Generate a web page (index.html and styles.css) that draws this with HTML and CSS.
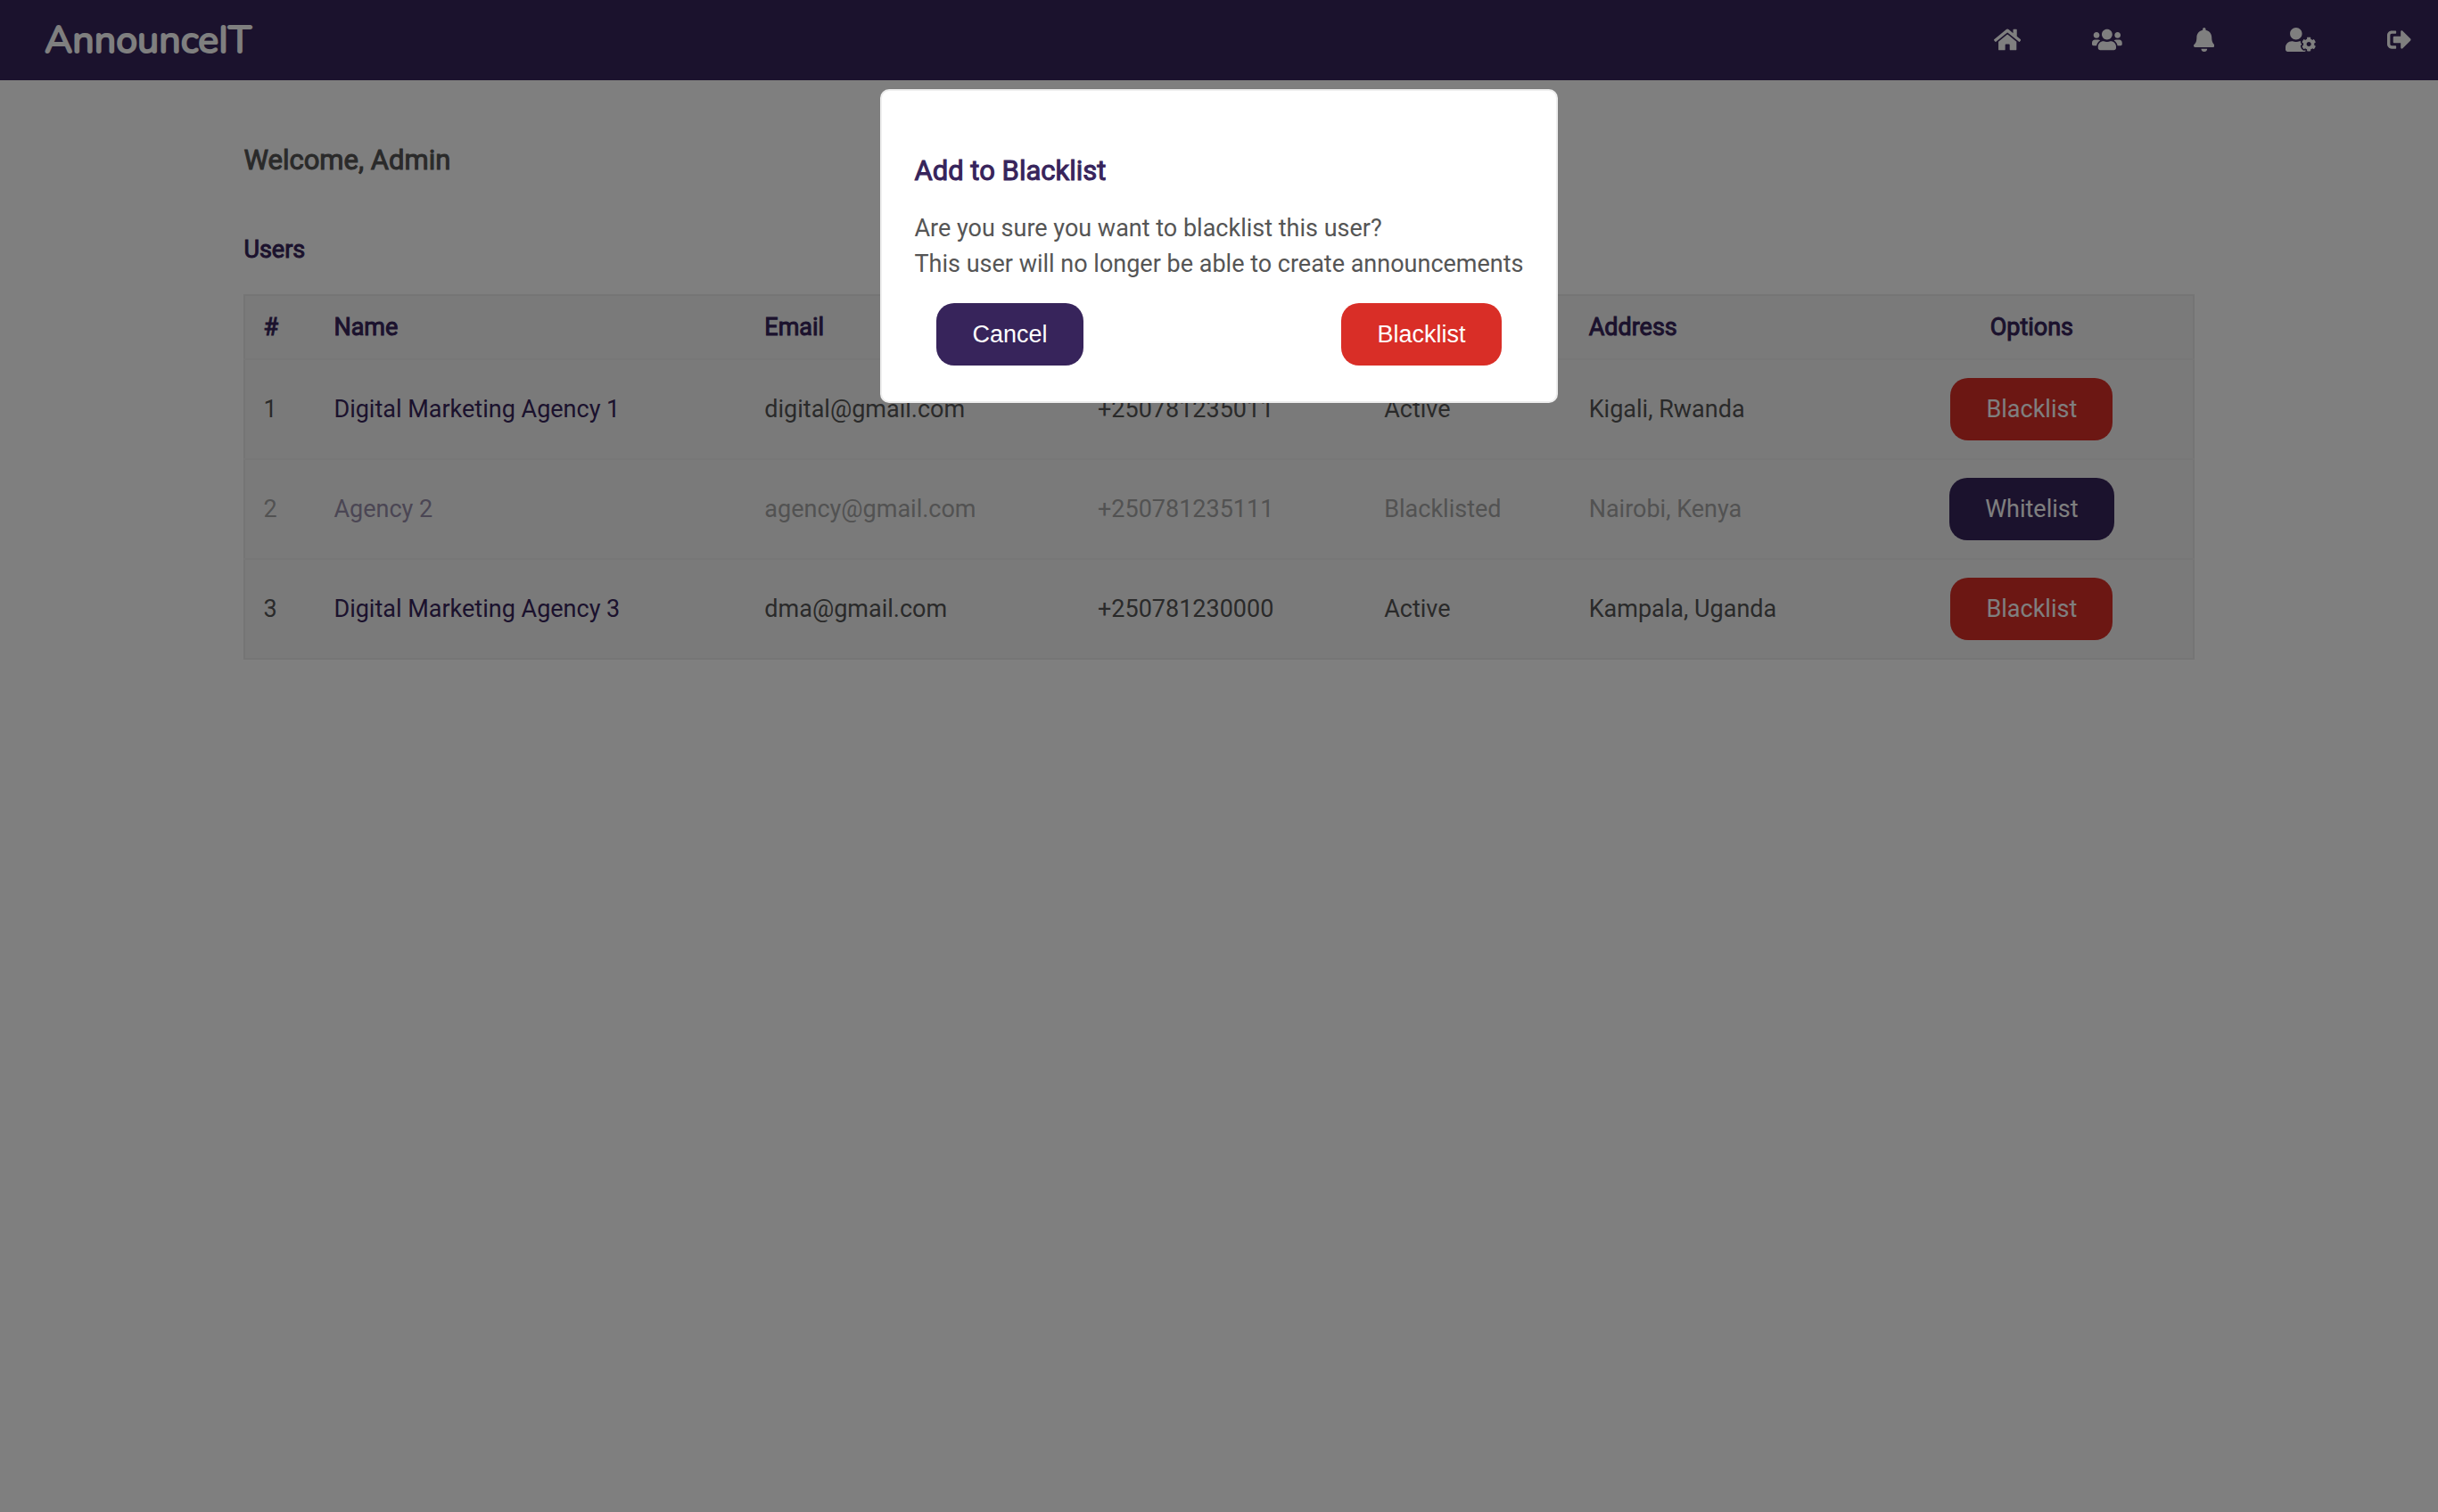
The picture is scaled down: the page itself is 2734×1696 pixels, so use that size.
FILE: index.html
```html
<!DOCTYPE html>
<html lang="en">
<head>
  <meta charset="utf-8">
  <meta name="viewport" content="width=device-width, initial-scale=1">
  <title>AnnounceIT</title>
  <link rel="stylesheet" href="styles.css">
</head>
<body>
  <header class="navbar">
    <a class="logo" href="#">AnnounceIT</a>
    <nav class="menu">
      <a class="menu-link" href="#" aria-label="Home"><svg class="icon" viewBox="0 0 576 512"><path d="M280.37 148.26L96 300.11V464a16 16 0 0 0 16 16l112.06-.29a16 16 0 0 0 15.92-16V368a16 16 0 0 1 16-16h64a16 16 0 0 1 16 16v95.64a16 16 0 0 0 16 16.05L464 480a16 16 0 0 0 16-16V300L295.67 148.26a12.19 12.19 0 0 0-15.3 0zM571.6 251.47L488 182.56V44.05a12 12 0 0 0-12-12h-56a12 12 0 0 0-12 12v72.61L318.47 43a48 48 0 0 0-61 0L4.34 251.47a12 12 0 0 0-1.6 16.9l25.5 31A12 12 0 0 0 45.15 301l235.22-193.74a12.19 12.19 0 0 1 15.3 0L530.9 301a12 12 0 0 0 16.9-1.6l25.5-31a12 12 0 0 0-1.7-16.93z"/></svg></a>
      <a class="menu-link" href="#" aria-label="Users"><svg class="icon" viewBox="0 0 640 512"><path d="M96 224c35.3 0 64-28.7 64-64s-28.7-64-64-64-64 28.7-64 64 28.7 64 64 64zm448 0c35.3 0 64-28.7 64-64s-28.7-64-64-64-64 28.7-64 64 28.7 64 64 64zm32 32h-64c-17.6 0-33.5 7.1-45.1 18.6 40.3 22.1 68.9 62 75.1 109.4h66c17.7 0 32-14.3 32-32v-32c0-35.3-28.7-64-64-64zm-256 0c61.9 0 112-50.1 112-112S381.9 32 320 32 208 82.1 208 144s50.1 112 112 112zm76.8 32h-8.3c-20.8 10-43.9 16-68.5 16s-47.6-6-68.5-16h-8.3C179.6 288 128 339.6 128 403.2V432c0 26.5 21.5 48 48 48h288c26.5 0 48-21.5 48-48v-28.8c0-63.6-51.6-115.2-115.2-115.2zm-223.7-13.4C161.5 263.1 145.6 256 128 256H64c-35.3 0-64 28.7-64 64v32c0 17.7 14.3 32 32 32h65.9c6.3-47.4 34.9-87.3 75.2-109.4z"/></svg></a>
      <a class="menu-link" href="#" aria-label="Notifications"><svg class="icon" viewBox="0 0 448 512"><path d="M224 512c35.32 0 63.97-28.65 63.97-64H160.03c0 35.35 28.65 64 63.97 64zm215.39-149.71c-19.32-20.76-55.47-51.99-55.47-154.29 0-77.7-54.48-139.9-127.94-155.16V32c0-17.67-14.32-32-31.98-32s-31.98 14.33-31.98 32v20.84C118.56 68.1 64.08 130.3 64.08 208c0 102.3-36.15 133.53-55.47 154.29-6 6.45-8.66 14.16-8.61 21.71.11 16.4 12.98 32 32.1 32h383.8c19.12 0 32-15.6 32.1-32 .05-7.55-2.61-15.27-8.61-21.71z"/></svg></a>
      <a class="menu-link" href="#" aria-label="Account settings"><svg class="icon" viewBox="0 0 640 512"><path d="M610.5 373.3c2.6-14.1 2.6-28.5 0-42.6l25.8-14.9c3-1.7 4.3-5.2 3.3-8.5-6.7-21.6-18.2-41.2-33.2-57.4-2.3-2.5-6-3.1-9-1.4l-25.8 14.9c-10.9-9.3-23.4-16.5-36.9-21.3v-29.8c0-3.4-2.4-6.4-5.7-7.1-22.3-5-45-4.8-66.2 0-3.3.7-5.7 3.7-5.7 7.1v29.8c-13.5 4.8-26 12-36.9 21.3l-25.8-14.9c-2.9-1.7-6.7-1.1-9 1.4-15 16.2-26.5 35.8-33.2 57.4-1 3.3.4 6.8 3.3 8.5l25.8 14.9c-2.6 14.1-2.6 28.5 0 42.6l-25.8 14.9c-3 1.7-4.3 5.2-3.3 8.5 6.7 21.6 18.2 41.1 33.2 57.4 2.3 2.5 6 3.1 9 1.4l25.8-14.9c10.9 9.3 23.4 16.5 36.9 21.3v29.8c0 3.4 2.4 6.4 5.7 7.1 22.3 5 45 4.8 66.2 0 3.3-.7 5.7-3.7 5.7-7.1v-29.8c13.5-4.8 26-12 36.9-21.3l25.8 14.9c2.9 1.7 6.7 1.1 9-1.4 15-16.2 26.5-35.8 33.2-57.4 1-3.3-.4-6.8-3.3-8.5l-25.8-14.9zM496 400.5c-26.8 0-48.5-21.8-48.5-48.5s21.8-48.5 48.5-48.5 48.5 21.8 48.5 48.5-21.7 48.5-48.5 48.5zM224 256c70.7 0 128-57.3 128-128S294.7 0 224 0 96 57.3 96 128s57.3 128 128 128zm201.2 226.5c-2.3-1.2-4.6-2.6-6.8-3.9l-7.9 4.6c-6 3.4-12.8 5.3-19.6 5.3-10.9 0-21.4-4.6-28.9-12.6-18.3-19.8-32.3-43.9-40.2-69.6-5.5-17.7 1.9-36.4 17.9-45.7l7.9-4.6c-.1-2.6-.1-5.2 0-7.8l-7.9-4.6c-16-9.2-23.4-28-17.9-45.7.9-2.9 2.2-5.8 3.2-8.7-3.8-.3-7.5-1.2-11.4-1.2h-16.7c-22.2 10.2-46.9 16-72.9 16s-50.6-5.8-72.9-16h-16.7C60.2 288 0 348.2 0 422.4V464c0 26.5 21.5 48 48 48h352c10.1 0 19.5-3.2 27.2-8.5-1.2-3.8-2-7.7-2-11.8v-9.2z"/></svg></a>
      <a class="menu-link" href="#" aria-label="Sign out"><svg class="icon" viewBox="0 0 512 512"><path d="M497 273L329 441c-15 15-41 4.5-41-17v-96H152c-13.3 0-24-10.7-24-24v-96c0-13.3 10.7-24 24-24h136V88c0-21.4 25.9-32 41-17l168 168c9.3 9.4 9.3 24.6 0 34zM192 436v-40c0-6.6-5.4-12-12-12H96c-17.7 0-32-14.3-32-32V160c0-17.7 14.3-32 32-32h84c6.6 0 12-5.4 12-12V76c0-6.6-5.4-12-12-12H96c-53 0-96 43-96 96v192c0 53 43 96 96 96h84c6.6 0 12-5.4 12-12z"/></svg></a>
    </nav>
  </header>

  <main class="content">
    <h1 class="welcome">Welcome, Admin</h1>
    <h2 class="section-title">Users</h2>
    <table class="users">
      <colgroup>
        <col class="col-id"><col class="col-name"><col class="col-email"><col class="col-phone">
        <col class="col-status"><col class="col-address"><col class="col-options">
      </colgroup>
      <thead>
        <tr><th>#</th><th>Name</th><th>Email</th><th>Phone</th><th>Status</th><th>Address</th><th class="options">Options</th></tr>
      </thead>
      <tbody>
        <tr>
          <td>1</td><td><a class="user-link" href="#">Digital Marketing Agency 1</a></td><td>digital@gmail.com</td><td>+250781235011</td><td>Active</td><td>Kigali, Rwanda</td>
          <td class="options"><button class="btn btn-danger" type="button">Blacklist</button></td>
        </tr>
        <tr class="blacklisted">
          <td>2</td><td><a class="user-link" href="#">Agency 2</a></td><td>agency@gmail.com</td><td>+250781235111</td><td>Blacklisted</td><td>Nairobi, Kenya</td>
          <td class="options"><button class="btn btn-primary" type="button">Whitelist</button></td>
        </tr>
        <tr>
          <td>3</td><td><a class="user-link" href="#">Digital Marketing Agency 3</a></td><td>dma@gmail.com</td><td>+250781230000</td><td>Active</td><td>Kampala, Uganda</td>
          <td class="options"><button class="btn btn-danger" type="button">Blacklist</button></td>
        </tr>
      </tbody>
    </table>
  </main>

  <div class="overlay">
    <section class="modal" role="dialog" aria-modal="true" aria-labelledby="modal-title">
      <h2 class="modal-title" id="modal-title">Add to Blacklist</h2>
      <p class="modal-text">Are you sure you want to blacklist this user?<br>This user will no longer be able to create announcements</p>
      <div class="modal-actions">
        <button class="btn btn-primary" type="button">Cancel</button>
        <button class="btn btn-danger" type="button">Blacklist</button>
      </div>
    </section>
  </div>
</body>
</html>
```
FILE: styles.css
```css
* {
  box-sizing: border-box;
}

body {
  margin: 0;
  background: #fff;
  color: #555;
  font-family: Roboto, "Liberation Sans", sans-serif;
  font-size: 27px;
  line-height: 40px;
}

h1,
h2,
p {
  margin: 0;
}

a {
  text-decoration: none;
}

/* Headings: regular weight, thickened by an outline */
.welcome,
.section-title,
.modal-title,
.users th {
  font-weight: 400;
  -webkit-text-stroke: 1px currentColor;
}

.navbar {
  display: flex;
  align-items: center;
  justify-content: space-between;
  height: 90px;
  padding: 0 30px 0 50px;
  background: #37245b;
}

.logo {
  color: #fff;
  font-family: Nunito, Lato, sans-serif;
  font-size: 43px;
  line-height: 60px;
  -webkit-text-stroke: 2px currentColor;
  stroke-linejoin: round;
}

.menu {
  display: flex;
  align-items: center;
  gap: 80px;
  padding-bottom: 2px;
}

.menu-link {
  display: flex;
  color: #fff;
}

.icon {
  height: 27px;
  fill: currentColor;
}

.content {
  width: 80%;
  margin: 0 auto;
  padding-top: 70px;
}

.welcome {
  font-size: 31px;
  margin-bottom: 60px;
}

.section-title {
  color: #37245b;
  font-size: 27px;
  margin-bottom: 30px;
}

.users {
  width: 100%;
  table-layout: fixed;
  border: 2px solid #ebebeb;
  border-collapse: collapse;
  background: #f5f5f5;
}

.col-id { width: 80px; }
.col-name { width: 22.1%; }
.col-email { width: 17.1%; }
.col-phone { width: 14.7%; }
.col-status { width: 10.5%; }
.col-address { width: 15.4%; }

.users th,
.users td {
  padding: 20px;
  border-bottom: 2px solid #eee;
  text-align: left;
  line-height: 30px;
}

.users tr:last-child td {
  border-bottom-color: #ebebeb;
}

.users th {
  color: #37245b;
}

.users .options {
  text-align: center;
}

.user-link {
  color: #37245b;
}

.blacklisted {
  color: #a5a5a5;
}

.blacklisted .user-link {
  color: #968da8;
}

.btn {
  height: 70px;
  padding: 0 40px;
  border: 0;
  border-radius: 20px;
  color: #fff;
  font-family: "Liberation Sans", Arial, sans-serif;
  font-size: 27px;
  cursor: pointer;
}

.users .btn {
  display: inline-block;
  vertical-align: middle;
  font-family: inherit;
}

.btn-primary {
  background: #37245b;
}

.btn-danger {
  background: #d92e27;
}

.overlay {
  position: fixed;
  inset: 0;
  display: flex;
  justify-content: center;
  align-items: flex-start;
  padding-top: 100px;
  background: rgba(0, 0, 0, 0.5);
}

.modal {
  padding: 70px 36px 40px;
  border: 2px solid #eee;
  border-radius: 10px;
  background: #fff;
}

.modal-title {
  margin-bottom: 24px;
  color: #37245b;
  font-size: 31px;
}

.modal-text {
  margin-bottom: 24px;
}

.modal-actions {
  display: flex;
  justify-content: space-between;
  padding: 0 25px;
}
```
